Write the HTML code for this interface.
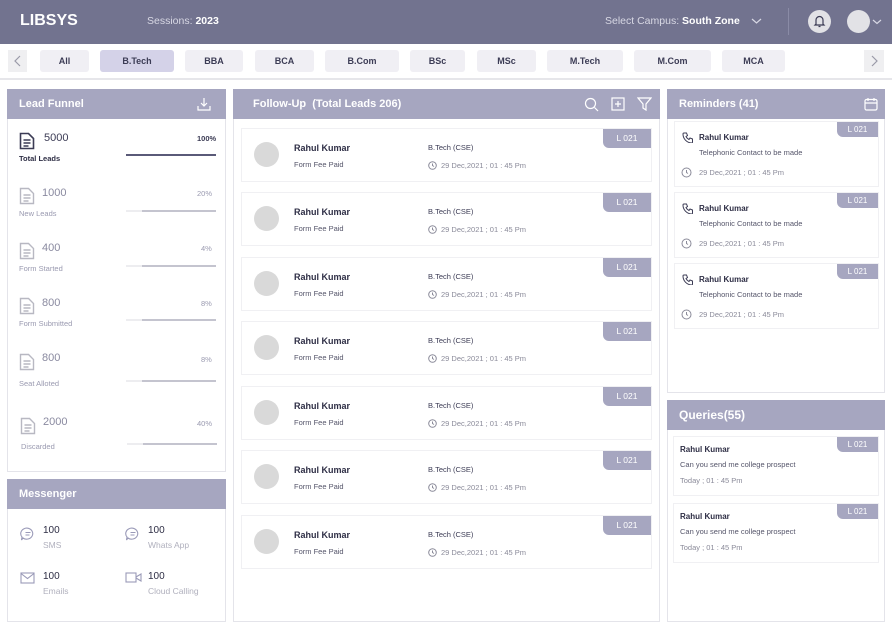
<!DOCTYPE html>
<html><head><meta charset="utf-8"><style>
*{box-sizing:border-box;margin:0;padding:0}
body{width:892px;height:633px;background:#fff;font-family:"Liberation Sans",sans-serif;position:relative;overflow:hidden;color:#2e2e45}
.a{position:absolute;white-space:nowrap}
.hdr{left:0;top:0;width:892px;height:44px;background:#72738f}
.pill{position:absolute;top:50px;height:22px;background:#f0eff4;border-radius:3px;font-size:9px;font-weight:bold;color:#3c3c55;text-align:center;line-height:22px}
.panel{position:absolute;border:1px solid #e4e4ea;background:#fff}
.ph{position:absolute;left:-1px;right:-1px;top:-1px;height:30px;background:#a6a6c0;color:#fff;font-weight:bold;font-size:11px;line-height:30px;padding-left:12px;white-space:nowrap}
.card{position:absolute;border:1px solid #f0f0f3;background:#fff}
.badge{position:absolute;right:0;top:0;width:48px;height:19px;background:#a6a6c0;color:#fff;font-size:8.5px;text-align:center;line-height:19px;border-radius:0 0 0 6px}
.av{position:absolute;left:12px;top:13px;width:25px;height:25px;border-radius:50%;background:#d9d9d9}
.nm{font-size:9px;font-weight:bold;color:#2e2e45}
.sm{font-size:7.5px;color:#55556a}
.gr{font-size:7.5px;color:#8a8a99}
.num{font-size:11px;color:#8a8aa0}
.lbl{font-size:7.5px;color:#9a9ab0}
.bar{position:absolute;left:126px;width:90px;height:2px;background:#ededf0}
.bar i{position:absolute;left:16px;right:0;top:0;height:2px;background:#c4c4cf}
</style></head><body>
<div class="a hdr"></div>
<div class="a" style="left:20px;top:12px;color:#fff;font-size:16px;font-weight:bold">LIBSYS</div>
<div class="a" style="left:147px;top:15px;color:#d8d8e4;font-size:10.5px">Sessions: <b style="color:#fff">2023</b></div>
<div class="a" style="left:605px;top:15px;color:#d8d8e4;font-size:10.5px">Select Campus: <b style="color:#fff">South Zone</b></div>
<svg class="a" style="left:751px;top:17px" width="11" height="8"><path d="M1 2l4.5 4 4.5-4" stroke="#d8d8e4" fill="none" stroke-width="1.2"/></svg>
<div class="a" style="left:788px;top:8px;width:1px;height:27px;background:#8a8ba6"></div>
<div class="a" style="left:808px;top:10px;width:23px;height:23px;border-radius:50%;background:#e2e2e6"></div>
<svg class="a" style="left:813px;top:14px" width="13" height="14"><path d="M3 10V6a3.5 3.5 0 017 0v4l1 1H2zM5.5 12.5h2" stroke="#3c3c55" fill="none" stroke-width="1.2"/></svg>
<div class="a" style="left:847px;top:10px;width:23px;height:23px;border-radius:50%;background:#e2e2e6"></div>
<svg class="a" style="left:872px;top:18px" width="10" height="8"><path d="M1 2l4 3.5 4-3.5" stroke="#d8d8e4" fill="none" stroke-width="1.2"/></svg>

<div class="a" style="left:0;top:78px;width:892px;height:2px;background:#e6e6ea"></div>
<div class="a" style="left:8px;top:50px;width:19px;height:22px;background:#efeff1"></div>
<svg class="a" style="left:13px;top:55px" width="9" height="12"><path d="M7 1L2 6l5 5" stroke="#9a9aa8" fill="none" stroke-width="1.2"/></svg>
<div class="a" style="left:864px;top:50px;width:20px;height:22px;background:#efeff1"></div>
<svg class="a" style="left:870px;top:55px" width="9" height="12"><path d="M2 1l5 5-5 5" stroke="#9a9aa8" fill="none" stroke-width="1.2"/></svg>
<div class="pill" style="left:40px;width:49px">All</div>
<div class="pill" style="left:100px;width:74px;background:#d4d2e8">B.Tech</div>
<div class="pill" style="left:185px;width:58px">BBA</div>
<div class="pill" style="left:255px;width:59px">BCA</div>
<div class="pill" style="left:325px;width:74px">B.Com</div>
<div class="pill" style="left:410px;width:55px">BSc</div>
<div class="pill" style="left:477px;width:59px">MSc</div>
<div class="pill" style="left:547px;width:76px">M.Tech</div>
<div class="pill" style="left:634px;width:77px">M.Com</div>
<div class="pill" style="left:722px;width:63px">MCA</div>

<div class="panel" style="left:7px;top:89px;width:219px;height:383px">
<div class="ph">Lead Funnel</div>
<svg class="a" style="left:189px;top:7px" width="14" height="14"><path d="M7 1v8M4 6l3 3 3-3M1 9v4h12V9" stroke="#fff" fill="none" stroke-width="1.2"/></svg>
</div>
<svg class="a" style="left:19px;top:132px" width="16" height="18"><path d="M1.5 1.5h8l5 5v10h-13z M4.5 8h7M4.5 11h7M4.5 14h5" stroke="#3c3c55" fill="none" stroke-width="1.6"/></svg>
<div class="a" style="left:44px;top:132px;font-size:11px;color:#3c3c55">5000</div>
<div class="a" style="left:19px;top:154px;font-size:7.5px;color:#2e2e45;font-weight:bold">Total Leads</div>
<div class="a" style="left:197px;top:134px;font-size:7.5px;font-weight:bold;color:#3c3c55">100%</div>
<div class="a" style="left:126px;top:154px;width:90px;height:2px;background:#5a5a78"></div>

<svg class="a" style="left:19px;top:187px" width="16" height="18"><path d="M1.5 1.5h8l5 5v10h-13z M4.5 8h7M4.5 11h7M4.5 14h5" stroke="#b8b8c2" fill="none" stroke-width="1.4"/></svg>
<div class="a num" style="left:42px;top:187px">1000</div><div class="a lbl" style="left:19px;top:209px">New Leads</div>
<div class="a lbl" style="left:197px;top:189px">20%</div><div class="bar" style="top:210px"><i></i></div>
<svg class="a" style="left:19px;top:242px" width="16" height="18"><path d="M1.5 1.5h8l5 5v10h-13z M4.5 8h7M4.5 11h7M4.5 14h5" stroke="#b8b8c2" fill="none" stroke-width="1.4"/></svg>
<div class="a num" style="left:42px;top:242px">400</div><div class="a lbl" style="left:19px;top:264px">Form Started</div>
<div class="a lbl" style="left:201px;top:244px">4%</div><div class="bar" style="top:265px"><i></i></div>
<svg class="a" style="left:19px;top:297px" width="16" height="18"><path d="M1.5 1.5h8l5 5v10h-13z M4.5 8h7M4.5 11h7M4.5 14h5" stroke="#b8b8c2" fill="none" stroke-width="1.4"/></svg>
<div class="a num" style="left:42px;top:297px">800</div><div class="a lbl" style="left:19px;top:319px">Form Submitted</div>
<div class="a lbl" style="left:201px;top:299px">8%</div><div class="bar" style="top:319px"><i></i></div>
<svg class="a" style="left:19px;top:353px" width="16" height="18"><path d="M1.5 1.5h8l5 5v10h-13z M4.5 8h7M4.5 11h7M4.5 14h5" stroke="#b8b8c2" fill="none" stroke-width="1.4"/></svg>
<div class="a num" style="left:42px;top:352px">800</div><div class="a lbl" style="left:19px;top:379px">Seat Alloted</div>
<div class="a lbl" style="left:201px;top:355px">8%</div><div class="bar" style="top:380px"><i></i></div>
<svg class="a" style="left:20px;top:417px" width="16" height="18"><path d="M1.5 1.5h8l5 5v10h-13z M4.5 8h7M4.5 11h7M4.5 14h5" stroke="#b8b8c2" fill="none" stroke-width="1.4"/></svg>
<div class="a num" style="left:43px;top:416px">2000</div><div class="a lbl" style="left:21px;top:442px">Discarded</div>
<div class="a lbl" style="left:197px;top:419px">40%</div><div class="bar" style="top:443px;left:127px"><i></i></div>

<div class="panel" style="left:7px;top:479px;width:219px;height:143px"><div class="ph">Messenger</div></div>
<svg class="a" style="left:20px;top:526px" width="16" height="15"><path d="M3 12l-1.5 2 .5-3A6 5.5 0 118 13a6 6 0 01-5-1zM5.5 6.5h5M5.5 9h4" stroke="#9a9ab8" fill="none" stroke-width="1.1"/></svg>
<div class="a nm" style="left:43px;top:525px;font-weight:normal;font-size:10px">100</div><div class="a lbl" style="left:43px;top:540px;font-size:8.5px;color:#b0b0bd">SMS</div>
<svg class="a" style="left:125px;top:526px" width="16" height="15"><path d="M3 12l-1.5 2 .5-3A6 5.5 0 118 13a6 6 0 01-5-1zM5.5 6.5h5M5.5 9h4" stroke="#9a9ab8" fill="none" stroke-width="1.1"/></svg>
<div class="a nm" style="left:148px;top:525px;font-weight:normal;font-size:10px">100</div><div class="a lbl" style="left:148px;top:540px;font-size:8.5px;color:#b0b0bd">Whats App</div>
<svg class="a" style="left:20px;top:572px" width="15" height="12"><rect x="1" y="1" width="13" height="10" stroke="#9a9ab8" fill="none" stroke-width="1.1"/><path d="M1 1.5l6.5 5 6.5-5" stroke="#9a9ab8" fill="none" stroke-width="1.1"/></svg>
<div class="a nm" style="left:43px;top:571px;font-weight:normal;font-size:10px">100</div><div class="a lbl" style="left:43px;top:586px;font-size:8.5px;color:#b0b0bd">Emails</div>
<svg class="a" style="left:125px;top:572px" width="17" height="11"><rect x="1" y="1" width="10" height="9" stroke="#9a9ab8" fill="none" stroke-width="1.1"/><path d="M11 5l5-3v7l-5-3" stroke="#9a9ab8" fill="none" stroke-width="1.1"/></svg>
<div class="a nm" style="left:148px;top:571px;font-weight:normal;font-size:10px">100</div><div class="a lbl" style="left:148px;top:586px;font-size:8.5px;color:#b0b0bd">Cloud Calling</div>

<div class="panel" style="left:233px;top:89px;width:427px;height:533px">
<div class="ph" style="padding-left:20px">Follow-Up &nbsp;(Total Leads 206)</div>
<svg class="a" style="left:350px;top:7px" width="15" height="15"><circle cx="6.5" cy="6.5" r="5" stroke="#fff" fill="none" stroke-width="1.2"/><path d="M10.5 10.5l3.5 3.5" stroke="#fff" stroke-width="1.2"/></svg>
<svg class="a" style="left:377px;top:7px" width="14" height="14"><rect x="1" y="1" width="12" height="12" stroke="#fff" fill="none" stroke-width="1.2"/><path d="M7 4v6M4 7h6" stroke="#fff" stroke-width="1.2"/></svg>
<svg class="a" style="left:403px;top:7px" width="15" height="14"><path d="M1 1h13l-5 6v6l-3-2V7z" stroke="#fff" fill="none" stroke-width="1.2"/></svg>
</div>

<div class="card" style="left:241px;top:128px;width:411px;height:54px"><div class="av"></div><div class="a nm" style="left:52px;top:14px">Rahul Kumar</div><div class="a sm" style="left:52px;top:31px">Form Fee Paid</div><div class="a sm" style="left:186px;top:14px;color:#3c3c55">B.Tech (CSE)</div><svg class="a" style="left:186px;top:32px" width="9" height="9"><circle cx="4.5" cy="4.5" r="3.8" stroke="#8a8a99" fill="none"/><path d="M4.5 2.5v2l1.5 1" stroke="#8a8a99" fill="none"/></svg><div class="a gr" style="left:199px;top:32px">29 Dec,2021 ; 01 : 45 Pm</div><div class="badge">L 021</div></div>
<div class="card" style="left:241px;top:192px;width:411px;height:54px"><div class="av"></div><div class="a nm" style="left:52px;top:14px">Rahul Kumar</div><div class="a sm" style="left:52px;top:31px">Form Fee Paid</div><div class="a sm" style="left:186px;top:14px;color:#3c3c55">B.Tech (CSE)</div><svg class="a" style="left:186px;top:32px" width="9" height="9"><circle cx="4.5" cy="4.5" r="3.8" stroke="#8a8a99" fill="none"/><path d="M4.5 2.5v2l1.5 1" stroke="#8a8a99" fill="none"/></svg><div class="a gr" style="left:199px;top:32px">29 Dec,2021 ; 01 : 45 Pm</div><div class="badge">L 021</div></div>
<div class="card" style="left:241px;top:257px;width:411px;height:54px"><div class="av"></div><div class="a nm" style="left:52px;top:14px">Rahul Kumar</div><div class="a sm" style="left:52px;top:31px">Form Fee Paid</div><div class="a sm" style="left:186px;top:14px;color:#3c3c55">B.Tech (CSE)</div><svg class="a" style="left:186px;top:32px" width="9" height="9"><circle cx="4.5" cy="4.5" r="3.8" stroke="#8a8a99" fill="none"/><path d="M4.5 2.5v2l1.5 1" stroke="#8a8a99" fill="none"/></svg><div class="a gr" style="left:199px;top:32px">29 Dec,2021 ; 01 : 45 Pm</div><div class="badge">L 021</div></div>
<div class="card" style="left:241px;top:321px;width:411px;height:54px"><div class="av"></div><div class="a nm" style="left:52px;top:14px">Rahul Kumar</div><div class="a sm" style="left:52px;top:31px">Form Fee Paid</div><div class="a sm" style="left:186px;top:14px;color:#3c3c55">B.Tech (CSE)</div><svg class="a" style="left:186px;top:32px" width="9" height="9"><circle cx="4.5" cy="4.5" r="3.8" stroke="#8a8a99" fill="none"/><path d="M4.5 2.5v2l1.5 1" stroke="#8a8a99" fill="none"/></svg><div class="a gr" style="left:199px;top:32px">29 Dec,2021 ; 01 : 45 Pm</div><div class="badge">L 021</div></div>
<div class="card" style="left:241px;top:386px;width:411px;height:54px"><div class="av"></div><div class="a nm" style="left:52px;top:14px">Rahul Kumar</div><div class="a sm" style="left:52px;top:31px">Form Fee Paid</div><div class="a sm" style="left:186px;top:14px;color:#3c3c55">B.Tech (CSE)</div><svg class="a" style="left:186px;top:32px" width="9" height="9"><circle cx="4.5" cy="4.5" r="3.8" stroke="#8a8a99" fill="none"/><path d="M4.5 2.5v2l1.5 1" stroke="#8a8a99" fill="none"/></svg><div class="a gr" style="left:199px;top:32px">29 Dec,2021 ; 01 : 45 Pm</div><div class="badge">L 021</div></div>
<div class="card" style="left:241px;top:450px;width:411px;height:54px"><div class="av"></div><div class="a nm" style="left:52px;top:14px">Rahul Kumar</div><div class="a sm" style="left:52px;top:31px">Form Fee Paid</div><div class="a sm" style="left:186px;top:14px;color:#3c3c55">B.Tech (CSE)</div><svg class="a" style="left:186px;top:32px" width="9" height="9"><circle cx="4.5" cy="4.5" r="3.8" stroke="#8a8a99" fill="none"/><path d="M4.5 2.5v2l1.5 1" stroke="#8a8a99" fill="none"/></svg><div class="a gr" style="left:199px;top:32px">29 Dec,2021 ; 01 : 45 Pm</div><div class="badge">L 021</div></div>
<div class="card" style="left:241px;top:515px;width:411px;height:54px"><div class="av"></div><div class="a nm" style="left:52px;top:14px">Rahul Kumar</div><div class="a sm" style="left:52px;top:31px">Form Fee Paid</div><div class="a sm" style="left:186px;top:14px;color:#3c3c55">B.Tech (CSE)</div><svg class="a" style="left:186px;top:32px" width="9" height="9"><circle cx="4.5" cy="4.5" r="3.8" stroke="#8a8a99" fill="none"/><path d="M4.5 2.5v2l1.5 1" stroke="#8a8a99" fill="none"/></svg><div class="a gr" style="left:199px;top:32px">29 Dec,2021 ; 01 : 45 Pm</div><div class="badge">L 021</div></div>

<div class="panel" style="left:667px;top:89px;width:218px;height:304px">
<div class="ph">Reminders (41)</div>
<svg class="a" style="left:196px;top:7px" width="14" height="14"><rect x="1" y="2.5" width="12" height="10.5" rx="1.5" stroke="#fff" fill="none" stroke-width="1.2"/><path d="M1 6h12M4 1v3M10 1v3" stroke="#fff" stroke-width="1.2"/></svg>
</div>
<div class="card" style="left:674px;top:121px;width:205px;height:66px"><div class="badge" style="width:41px;height:15px;line-height:15px;font-size:8px">L 021</div>
<svg class="a" style="left:7px;top:10px" width="11" height="11"><path d="M2 1l2.5 0 1 2.5-1.5 1a6 6 0 003 3l1-1.5 2.5 1V10a1 1 0 01-1 1A9 9 0 011 2a1 1 0 011-1z" stroke="#3c3c55" fill="none" stroke-width="1"/></svg>
<div class="a nm" style="left:24px;top:11px;font-size:8px">Rahul Kumar</div><div class="a sm" style="left:24px;top:26px">Telephonic Contact to be made</div>
<svg class="a" style="left:6px;top:45px" width="11" height="11"><circle cx="5.5" cy="5.5" r="4.5" stroke="#8a8a99" fill="none"/><path d="M5.5 3v2.5l1.5 1" stroke="#8a8a99" fill="none"/></svg><div class="a gr" style="left:24px;top:46px">29 Dec,2021 ; 01 : 45 Pm</div></div>
<div class="card" style="left:674px;top:192px;width:205px;height:66px"><div class="badge" style="width:41px;height:15px;line-height:15px;font-size:8px">L 021</div>
<svg class="a" style="left:7px;top:10px" width="11" height="11"><path d="M2 1l2.5 0 1 2.5-1.5 1a6 6 0 003 3l1-1.5 2.5 1V10a1 1 0 01-1 1A9 9 0 011 2a1 1 0 011-1z" stroke="#3c3c55" fill="none" stroke-width="1"/></svg>
<div class="a nm" style="left:24px;top:11px;font-size:8px">Rahul Kumar</div><div class="a sm" style="left:24px;top:26px">Telephonic Contact to be made</div>
<svg class="a" style="left:6px;top:45px" width="11" height="11"><circle cx="5.5" cy="5.5" r="4.5" stroke="#8a8a99" fill="none"/><path d="M5.5 3v2.5l1.5 1" stroke="#8a8a99" fill="none"/></svg><div class="a gr" style="left:24px;top:46px">29 Dec,2021 ; 01 : 45 Pm</div></div>
<div class="card" style="left:674px;top:263px;width:205px;height:66px"><div class="badge" style="width:41px;height:15px;line-height:15px;font-size:8px">L 021</div>
<svg class="a" style="left:7px;top:10px" width="11" height="11"><path d="M2 1l2.5 0 1 2.5-1.5 1a6 6 0 003 3l1-1.5 2.5 1V10a1 1 0 01-1 1A9 9 0 011 2a1 1 0 011-1z" stroke="#3c3c55" fill="none" stroke-width="1"/></svg>
<div class="a nm" style="left:24px;top:11px;font-size:8px">Rahul Kumar</div><div class="a sm" style="left:24px;top:26px">Telephonic Contact to be made</div>
<svg class="a" style="left:6px;top:45px" width="11" height="11"><circle cx="5.5" cy="5.5" r="4.5" stroke="#8a8a99" fill="none"/><path d="M5.5 3v2.5l1.5 1" stroke="#8a8a99" fill="none"/></svg><div class="a gr" style="left:24px;top:46px">29 Dec,2021 ; 01 : 45 Pm</div></div>

<div class="panel" style="left:667px;top:400px;width:218px;height:222px"><div class="ph" style="font-size:12px">Queries(55)</div></div>
<div class="card" style="left:673px;top:436px;width:206px;height:60px"><div class="badge" style="width:41px;height:15px;line-height:15px;font-size:8px">L 021</div>
<div class="a nm" style="left:6px;top:8px;font-size:8px">Rahul Kumar</div><div class="a sm" style="left:6px;top:23px">Can you send me college prospect</div><div class="a gr" style="left:6px;top:39px">Today ; 01 : 45 Pm</div></div>
<div class="card" style="left:673px;top:503px;width:206px;height:60px"><div class="badge" style="width:41px;height:15px;line-height:15px;font-size:8px">L 021</div>
<div class="a nm" style="left:6px;top:8px;font-size:8px">Rahul Kumar</div><div class="a sm" style="left:6px;top:23px">Can you send me college prospect</div><div class="a gr" style="left:6px;top:39px">Today ; 01 : 45 Pm</div></div>
</body></html>
